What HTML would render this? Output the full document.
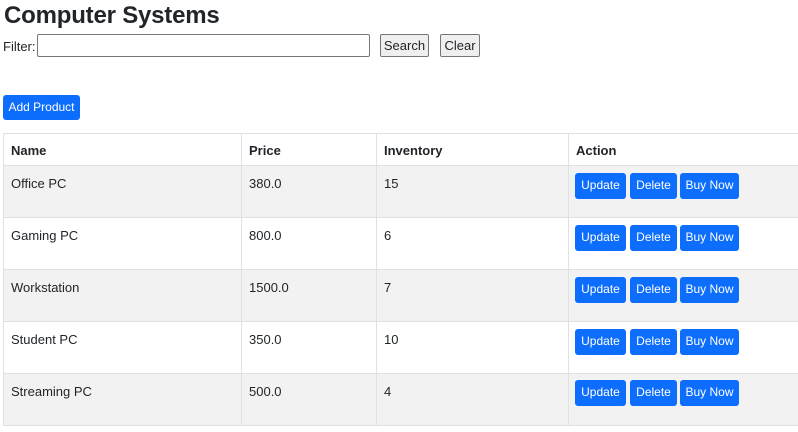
<!DOCTYPE html>
<html><head><meta charset="utf-8"><style>
*{box-sizing:border-box;margin:0;padding:0}
body{width:798px;height:432px;overflow:hidden;background:#fff;font-family:"Liberation Sans",sans-serif;color:#212529;position:relative}
.a{position:absolute}
h1{position:absolute;left:4px;top:2px;font-size:24px;font-weight:bold;letter-spacing:-0.2px}
.lbl{left:3px;top:39px;font-size:13px}
.inp{left:37px;top:34px;width:333px;height:23px;border:1px solid #767676;border-radius:2px;background:#fff}
.gb{height:23px;top:34px;border:1px solid #767676;background:#efefef;border-radius:2px;font-size:13px;line-height:21px;text-align:center}
.add{left:3px;top:95px;width:77px;height:25px;background:#0d6efd;color:#fff;border-radius:3px;font-size:12px;line-height:25px;text-align:center}
.row{position:absolute;left:3px;width:810px;border-bottom:1px solid #dee2e6}
.c{position:absolute;top:0;bottom:0;border-right:1px solid #dee2e6;font-size:13px;padding:10px 7px}
.b{position:absolute;height:26px;background:#0d6efd;color:#fff;border-radius:3px;font-size:12px;line-height:25px;text-align:center}
</style></head><body>
<h1>Computer Systems</h1>
<div class="a lbl">Filter:</div>
<div class="a inp"></div>
<div class="a gb" style="left:380px;width:49px">Search</div>
<div class="a gb" style="left:440px;width:40px">Clear</div>
<div class="a add">Add Product</div>

<div class="row" style="top:133px;height:33px;border-top:1px solid #dee2e6;border-left:1px solid #dee2e6">
<div class="c" style="left:0;width:238px;font-weight:bold;padding-top:9px">Name</div>
<div class="c" style="left:238px;width:135px;font-weight:bold;padding-top:9px">Price</div>
<div class="c" style="left:373px;width:192px;font-weight:bold;padding-top:9px">Inventory</div>
<div class="c" style="left:565px;width:245px;font-weight:bold;padding-top:9px">Action</div>
</div>

<div class="row" style="top:166px;height:52px;background:#f2f2f2;border-left:1px solid #dee2e6">
<div class="c" style="left:0;width:238px">Office PC</div><div class="c" style="left:238px;width:135px">380.0</div><div class="c" style="left:373px;width:192px">15</div><div class="c" style="left:565px;width:245px"></div>
</div>
<div class="row" style="top:218px;height:52px;background:#fff;border-left:1px solid #dee2e6">
<div class="c" style="left:0;width:238px">Gaming PC</div><div class="c" style="left:238px;width:135px">800.0</div><div class="c" style="left:373px;width:192px">6</div><div class="c" style="left:565px;width:245px"></div>
</div>
<div class="row" style="top:270px;height:52px;background:#f2f2f2;border-left:1px solid #dee2e6">
<div class="c" style="left:0;width:238px">Workstation</div><div class="c" style="left:238px;width:135px">1500.0</div><div class="c" style="left:373px;width:192px">7</div><div class="c" style="left:565px;width:245px"></div>
</div>
<div class="row" style="top:322px;height:52px;background:#fff;border-left:1px solid #dee2e6">
<div class="c" style="left:0;width:238px">Student PC</div><div class="c" style="left:238px;width:135px">350.0</div><div class="c" style="left:373px;width:192px">10</div><div class="c" style="left:565px;width:245px"></div>
</div>
<div class="row" style="top:374px;height:52px;background:#f2f2f2;border-left:1px solid #dee2e6">
<div class="c" style="left:0;width:238px">Streaming PC</div><div class="c" style="left:238px;width:135px">500.0</div><div class="c" style="left:373px;width:192px">4</div><div class="c" style="left:565px;width:245px"></div>
</div>

<div class="b" style="left:575px;top:173px;width:51px">Update</div><div class="b" style="left:630px;top:173px;width:47px">Delete</div><div class="b" style="left:680px;top:173px;width:59px">Buy Now</div>
<div class="b" style="left:575px;top:225px;width:51px">Update</div><div class="b" style="left:630px;top:225px;width:47px">Delete</div><div class="b" style="left:680px;top:225px;width:59px">Buy Now</div>
<div class="b" style="left:575px;top:277px;width:51px">Update</div><div class="b" style="left:630px;top:277px;width:47px">Delete</div><div class="b" style="left:680px;top:277px;width:59px">Buy Now</div>
<div class="b" style="left:575px;top:329px;width:51px">Update</div><div class="b" style="left:630px;top:329px;width:47px">Delete</div><div class="b" style="left:680px;top:329px;width:59px">Buy Now</div>
<div class="b" style="left:575px;top:380px;width:51px">Update</div><div class="b" style="left:630px;top:380px;width:47px">Delete</div><div class="b" style="left:680px;top:380px;width:59px">Buy Now</div>
</body></html>
